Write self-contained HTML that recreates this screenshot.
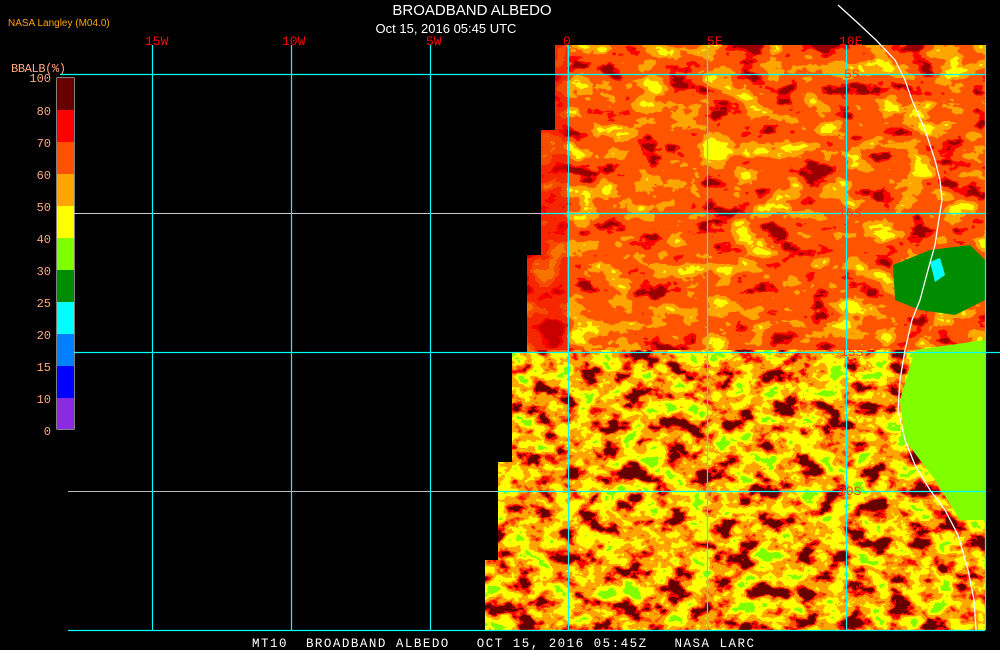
<!DOCTYPE html>
<html><head><meta charset="utf-8"><style>
html,body{margin:0;padding:0;background:#000;width:1000px;height:650px;overflow:hidden}
svg{display:block}
text{font-family:"Liberation Sans",sans-serif}
.m{font-family:"Liberation Mono",monospace}
</style></head><body>
<svg width="1000" height="650" viewBox="0 0 1000 650" xmlns="http://www.w3.org/2000/svg">
<defs>
<filter id="nt" x="0" y="0" width="100%" height="100%" filterUnits="userSpaceOnUse" color-interpolation-filters="sRGB">
<feTurbulence type="fractalNoise" baseFrequency="0.03 0.05" numOctaves="4" seed="3"/>
<feColorMatrix type="matrix" values="1.8 0 0 0 -0.4  1.8 0 0 0 -0.4  1.8 0 0 0 -0.4  0 0 0 0 1"/>
<feComponentTransfer>
<feFuncR type="discrete" tableValues="0.6 1 1 1 1 1 1 1"/>
<feFuncG type="discrete" tableValues="0 0 0.33 0.33 0.33 0.65 0.65 1"/>
<feFuncB type="discrete" tableValues="0 0 0 0 0 0 0 0"/>
</feComponentTransfer>
</filter>
<filter id="nb" x="0" y="0" width="100%" height="100%" filterUnits="userSpaceOnUse" color-interpolation-filters="sRGB">
<feTurbulence type="fractalNoise" baseFrequency="0.045 0.06" numOctaves="4" seed="7"/>
<feColorMatrix type="matrix" values="2 0 0 0 -0.5  2 0 0 0 -0.5  2 0 0 0 -0.5  0 0 0 0 1"/>
<feComponentTransfer>
<feFuncR type="discrete" tableValues="0.4 0.4 1 1 1 1 1 1 1 0.5"/>
<feFuncG type="discrete" tableValues="0 0 0 0.33 0.65 0.65 1 1 1 1"/>
<feFuncB type="discrete" tableValues="0 0 0 0 0 0 0 0 0 0"/>
</feComponentTransfer>
</filter>
<clipPath id="cl"><polygon points="555,45 985,45 985,630 485,630 485,560 498,560 498,462 512,462 512,352 527,352 527,255 541,255 541,130 555,130"/></clipPath>
<clipPath id="ct"><rect x="0" y="0" width="1000" height="350"/></clipPath>
<clipPath id="cb"><rect x="0" y="350" width="1000" height="300"/></clipPath>
</defs>
<g clip-path="url(#cl)">
<g clip-path="url(#ct)"><rect x="480" y="40" width="510" height="320" fill="#f60" filter="url(#nt)"/></g>
<g clip-path="url(#cb)"><rect x="480" y="340" width="510" height="300" fill="#fa0" filter="url(#nb)"/></g>
<rect x="527" y="45" width="40" height="307" fill="#e00" opacity="0.55"/>
<path d="M893,265 L930,250 L970,245 L985,260 L985,300 L955,315 L920,310 L895,300Z" fill="#008c00"/>
<path d="M915,350 L985,340 L985,520 L960,520 L935,480 L905,440 L900,400Z" fill="#80ff00"/>
<path d="M930,262 L940,258 L945,275 L935,282Z" fill="#0ff"/>
</g>
<!-- grid -->
<line x1="68" y1="213.5" x2="541" y2="213.5" stroke="#ccc" stroke-width="1"/>
<line x1="68" y1="491.5" x2="498" y2="491.5" stroke="#bbb" stroke-width="1"/>
<g stroke="#0ff" stroke-width="1.2" fill="none">
<line x1="541" y1="213.5" x2="985" y2="213.5"/>
<line x1="498" y1="491.5" x2="985" y2="491.5"/>
<line x1="60" y1="74.5" x2="985" y2="74.5"/>
<line x1="68" y1="352.5" x2="1000" y2="352.5"/>
<line x1="68" y1="630.5" x2="985" y2="630.5"/>
<line x1="152.5" y1="45" x2="152.5" y2="630"/>
<line x1="291.5" y1="45" x2="291.5" y2="630"/>
<line x1="430.5" y1="45" x2="430.5" y2="630"/>
<line x1="568.5" y1="45" x2="568.5" y2="630"/>
<line x1="707.5" y1="45" x2="707.5" y2="630"/>
<line x1="846.5" y1="45" x2="846.5" y2="630"/>
<line x1="985.5" y1="45" x2="985.5" y2="630"/>
</g>
<!-- coast -->
<polyline points="838,5 860,25 876,40 895,60 905,80 912,100 925,130 935,160 940,180 942,200 938,225 935,245 928,270 920,300 912,320 905,350 900,380 898,410 905,440 915,465 930,490 945,510 958,535 968,570 974,600 976,630" fill="none" stroke="#fff" stroke-width="1.3"/>
<!-- lat labels -->
<g font-size="13" fill="#ff4000">
<text x="844" y="78" class="m">5S</text>
<text x="838" y="217" class="m">10S</text>
<text x="840" y="356" class="m">15S</text>
<text x="838" y="495" class="m">20S</text>
</g>
<g font-size="13" fill="#f00">
<text x="145" y="45" class="m">15W</text>
<text x="282" y="45" class="m">10W</text>
<text x="426" y="45" class="m">5W</text>
<text x="563" y="45" class="m">0</text>
<text x="707" y="45" class="m">5E</text>
<text x="839" y="45" class="m">10E</text>
</g>
<!-- titles -->
<text x="472" y="15" font-size="15" fill="#fff" text-anchor="middle">BROADBAND ALBEDO</text>
<text x="446" y="33" font-size="13" fill="#fff" text-anchor="middle">Oct 15, 2016 05:45 UTC</text>
<text x="8" y="26" font-size="10" fill="#ffa500">NASA Langley (M04.0)</text>
<!-- legend -->
<text x="11" y="72" font-size="12" fill="#ffa880" class="m" textLength="55">BBALB(%)</text>
<g>
<rect x="56.5" y="77.5" width="18" height="352" fill="#fff"/>
<rect x="57" y="78" width="17" height="32" fill="#600"/>
<rect x="57" y="110" width="17" height="32" fill="#f00"/>
<rect x="57" y="142" width="17" height="32" fill="#ff5000"/>
<rect x="57" y="174" width="17" height="32" fill="#ffa500"/>
<rect x="57" y="206" width="17" height="32" fill="#ff0"/>
<rect x="57" y="238" width="17" height="32" fill="#80ff00"/>
<rect x="57" y="270" width="17" height="32" fill="#008c00"/>
<rect x="57" y="302" width="17" height="32" fill="#0ff"/>
<rect x="57" y="334" width="17" height="32" fill="#0080ff"/>
<rect x="57" y="366" width="17" height="32" fill="#00f"/>
<rect x="57" y="398" width="17" height="31" fill="#8a2be2"/>
</g>
<g font-size="12" fill="#ffa880" text-anchor="end">
<text x="51" y="82" class="m">100</text>
<text x="51" y="115" class="m">80</text>
<text x="51" y="147" class="m">70</text>
<text x="51" y="179" class="m">60</text>
<text x="51" y="211" class="m">50</text>
<text x="51" y="243" class="m">40</text>
<text x="51" y="275" class="m">30</text>
<text x="51" y="307" class="m">25</text>
<text x="51" y="339" class="m">20</text>
<text x="51" y="371" class="m">15</text>
<text x="51" y="403" class="m">10</text>
<text x="51" y="435" class="m">0</text>
</g>
<text x="252" y="647" font-size="12.5" fill="#fff" class="m" textLength="502" xml:space="preserve">MT10  BROADBAND ALBEDO   OCT 15, 2016 05:45Z   NASA LARC</text>
</svg>
</body></html>
